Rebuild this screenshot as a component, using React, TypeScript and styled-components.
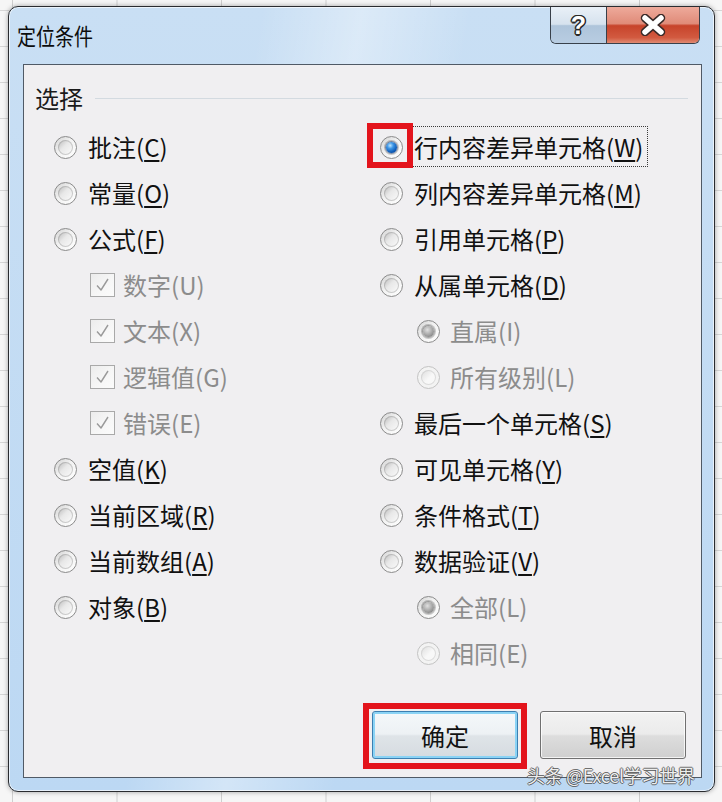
import React from 'react';
import styled, { createGlobalStyle } from 'styled-components';

const Global = createGlobalStyle`
  html, body { margin: 0; padding: 0; }
  body {
    width: 722px;
    height: 802px;
    overflow: hidden;
    background-color: #f6f6f6;
    background-image:
      linear-gradient(90deg, #cfcfcf 1px, transparent 1px),
      linear-gradient(180deg, #d6d6d6 1px, transparent 1px);
    background-size: 104.5px 100%, 100% 36px;
    background-position: 12px 0, 0 10px;
    font-family: "Noto Sans CJK SC", "Noto Sans", sans-serif;
  }
`;

const Window = styled.div`
  position: relative;
  box-sizing: border-box;
  margin: 6px 0 0 8px;
  width: 707px;
  height: 786px;
  border: 1px solid #2a2c30;
  border-radius: 10px;
  background:
    linear-gradient(100deg, rgba(255,255,255,0) 30%, rgba(255,255,255,0.35) 42%, rgba(255,255,255,0) 55%),
    linear-gradient(180deg, #c9dff4 0%, #bcd8f3 100%);
  box-shadow: inset 0 0 0 1px rgba(255, 255, 255, 0.65), 0 0 5px rgba(0, 0, 0, 0.35);
  display: flex;
  flex-direction: column;
`;

const TitleBar = styled.div`
  height: 57px;
  display: flex;
  justify-content: space-between;
  align-items: flex-start;
  padding-left: 8px;
  padding-right: 14px;
`;

const Title = styled.div`
  margin-top: 17px;
  font-size: 19px;
  line-height: 24px;
  color: #0c0c0c;
  transform: scaleY(1.18);
  transform-origin: left center;
`;

const Controls = styled.div`
  display: flex;
  height: 36px;
  border: 1px solid #38404a;
  border-top: none;
  border-radius: 0 0 6px 6px;
  overflow: hidden;
`;

const HelpButton = styled.div`
  width: 55px;
  display: flex;
  align-items: center;
  justify-content: center;
  border-right: 1px solid #38404a;
  background: linear-gradient(180deg, #e9f0f7 0%, #d6e2ee 48%, #aec4da 52%, #b8cde2 100%);
  font-family: "Liberation Sans", Arial, sans-serif;
  font-weight: bold;
  font-size: 25px;
  color: #ffffff;
  text-shadow:
    -1.5px 0 #2a2a2a, 1.5px 0 #2a2a2a, 0 -1.5px #2a2a2a, 0 1.5px #2a2a2a,
    -1px -1px #2a2a2a, 1px 1px #2a2a2a, -1px 1px #2a2a2a, 1px -1px #2a2a2a;
`;

const CloseButton = styled.div`
  width: 92px;
  display: flex;
  align-items: center;
  justify-content: center;
  background: linear-gradient(180deg, #eeaa9b 0%, #e08b79 46%, #c7432b 52%, #d25a40 85%, #e08a72 100%);
`;

const Client = styled.div`
  position: relative;
  flex: 1;
  margin: 0 12px 13px 14px;
  border: 1px solid #505a66;
  background: #f0eff1;
  display: flex;
  flex-direction: column;
`;

const GroupHeader = styled.div`
  margin-top: 20px;
  height: 26px;
  display: flex;
  align-items: center;
  padding-left: 11px;
  padding-right: 13px;
`;

const GroupLabel = styled.span`
  font-size: 24px;
  line-height: 26px;
  color: #1a1a1a;
`;

const GroupLine = styled.span`
  flex: 1;
  height: 1px;
  margin-left: 12px;
  background: #d3dae0;
`;

const Columns = styled.div`
  margin-top: 13px;
  padding-left: 30px;
  display: grid;
  grid-template-columns: 326px 1fr;
`;

const Column = styled.div`
  display: flex;
  flex-direction: column;
`;

const Row = styled.div<{ $indent: number }>`
  height: 46px;
  display: flex;
  align-items: center;
  padding-left: ${(p) => p.$indent}px;
`;

type RadioState = 'off' | 'on' | 'dimOn' | 'disabled';

const RadioCircle = styled.span<{ $state: RadioState }>`
  flex: none;
  position: relative;
  box-sizing: border-box;
  width: 23px;
  height: 23px;
  border-radius: 50%;
  border: 1px solid ${(p) => (p.$state === 'disabled' ? '#c3c3c3' : '#8b8b8b')};
  background: ${(p) => (p.$state === 'disabled' ? '#f3f3f3' : 'linear-gradient(135deg, #d2d2d2 0%, #f2f2f2 45%, #ffffff 100%)')};
  &::before {
    content: '';
    position: absolute;
    inset: 3px;
    border-radius: 50%;
    background: ${(p) =>
      p.$state === 'disabled'
        ? 'linear-gradient(135deg, #dcdcdc 0%, #f8f8f8 55%)'
        : 'linear-gradient(135deg, #b8b8b8 0%, #e8e8e8 42%, #fbfbfb 100%)'};
    box-shadow: inset 0 0 0 1px ${(p) => (p.$state === 'disabled' ? 'rgba(200,200,200,0.6)' : 'rgba(140,140,140,0.4)')};
  }
  &::after {
    content: '';
    display: ${(p) => (p.$state === 'on' || p.$state === 'dimOn' ? 'block' : 'none')};
    position: absolute;
    inset: 5px;
    border-radius: 50%;
    background: ${(p) =>
      p.$state === 'on'
        ? 'radial-gradient(circle at 38% 32%, #bfe6ff 0%, #3f97e6 30%, #0f5cb8 65%, #0a3a80 100%)'
        : 'radial-gradient(circle at 40% 35%, #e0e0e0 0%, #a8a8a8 50%, #6f6f6f 100%)'};
    box-shadow: 0 0 0 1px ${(p) => (p.$state === 'on' ? 'rgba(20,50,100,0.5)' : 'rgba(80,80,80,0.45)')};
  }
`;

const RadioWrap = styled.span`
  position: relative;
  display: inline-flex;
`;

const RedMark = styled.span<{ $l: number; $t: number; $w: number; $h: number }>`
  position: absolute;
  left: ${(p) => p.$l}px;
  top: ${(p) => p.$t}px;
  width: ${(p) => p.$w}px;
  height: ${(p) => p.$h}px;
  box-sizing: border-box;
  border: 6px solid #e3141c;
  pointer-events: none;
`;

const CheckBox = styled.span`
  flex: none;
  box-sizing: border-box;
  width: 25px;
  height: 24px;
  border: 1px solid #a9a9a9;
  background: linear-gradient(135deg, #ececec 0%, #f7f7f7 60%, #fbfbfb 100%);
  display: flex;
  align-items: center;
  justify-content: center;
`;

const Label = styled.span<{ $gap: number; $disabled?: boolean }>`
  margin-left: ${(p) => p.$gap}px;
  font-size: 24px;
  line-height: 30px;
  color: ${(p) => (p.$disabled ? '#8c8c8c' : '#111111')};
  white-space: nowrap;
  u {
    text-decoration-thickness: 1.5px;
    text-underline-offset: 3px;
  }
`;

const Focus = styled.span`
  margin: -3px -5px -3px -3px;
  padding: 2px 4px 2px 2px;
  border: 1px dotted #3a3a3a;
`;

const ButtonRow = styled.div`
  margin-top: auto;
  display: flex;
  justify-content: flex-end;
  gap: 22px;
  padding-right: 15px;
  padding-bottom: 18px;
`;

const DialogButton = styled.div<{ $default?: boolean }>`
  position: relative;
  box-sizing: border-box;
  width: 146px;
  height: 48px;
  border-radius: 3px;
  border: 1px solid ${(p) => (p.$default ? '#3c7fb1' : '#707070')};
  background: ${(p) =>
    p.$default
      ? 'linear-gradient(180deg, #f4f8fa 0%, #edf1f4 48%, #dfe4e8 52%, #d5dbe0 100%)'
      : 'linear-gradient(180deg, #f2f2f2 0%, #ebebeb 48%, #dddddd 52%, #cfcfcf 100%)'};
  box-shadow: inset 0 0 0 ${(p) => (p.$default ? '2px #8ad3f5' : '1px rgba(255,255,255,0.75)')};
  display: flex;
  align-items: center;
  justify-content: center;
  font-size: 24px;
  color: #111111;
`;

const Watermark = styled.div`
  position: absolute;
  left: 518px;
  top: 757px;
  font-size: 18px;
  line-height: 22px;
  color: rgba(255, 255, 255, 0.92);
  letter-spacing: -0.3px;
  text-shadow:
    -1px 0 rgba(70, 70, 70, 0.75), 1px 0 rgba(70, 70, 70, 0.75),
    0 -1px rgba(70, 70, 70, 0.75), 0 1px rgba(70, 70, 70, 0.75);
  white-space: nowrap;
`;

type Item = {
  kind: 'radio' | 'check' | 'sub';
  text: string;
  key: string;
  state?: RadioState;
  marked?: boolean;
  focus?: boolean;
};

const leftItems: Item[] = [
  { kind: 'radio', text: '批注', key: 'C' },
  { kind: 'radio', text: '常量', key: 'O' },
  { kind: 'radio', text: '公式', key: 'F' },
  { kind: 'check', text: '数字', key: 'U' },
  { kind: 'check', text: '文本', key: 'X' },
  { kind: 'check', text: '逻辑值', key: 'G' },
  { kind: 'check', text: '错误', key: 'E' },
  { kind: 'radio', text: '空值', key: 'K' },
  { kind: 'radio', text: '当前区域', key: 'R' },
  { kind: 'radio', text: '当前数组', key: 'A' },
  { kind: 'radio', text: '对象', key: 'B' },
];

const rightItems: Item[] = [
  { kind: 'radio', text: '行内容差异单元格', key: 'W', state: 'on', marked: true, focus: true },
  { kind: 'radio', text: '列内容差异单元格', key: 'M' },
  { kind: 'radio', text: '引用单元格', key: 'P' },
  { kind: 'radio', text: '从属单元格', key: 'D' },
  { kind: 'sub', text: '直属', key: 'I', state: 'dimOn' },
  { kind: 'sub', text: '所有级别', key: 'L', state: 'disabled' },
  { kind: 'radio', text: '最后一个单元格', key: 'S' },
  { kind: 'radio', text: '可见单元格', key: 'Y' },
  { kind: 'radio', text: '条件格式', key: 'T' },
  { kind: 'radio', text: '数据验证', key: 'V' },
  { kind: 'sub', text: '全部', key: 'L', state: 'dimOn' },
  { kind: 'sub', text: '相同', key: 'E', state: 'disabled' },
];

const CheckMark = () => (
  <svg width="17" height="16" viewBox="0 0 17 16">
    <path d="M3 8.5 L7 13 L14 2" fill="none" stroke="#9a9a9a" strokeWidth="1.4" strokeLinejoin="round" />
  </svg>
);

const CloseIcon = () => (
  <svg width="28" height="22" viewBox="0 0 28 22">
    <path d="M6 4 L22 18 M22 4 L6 18" stroke="#3a2a28" strokeWidth="8.5" strokeLinecap="round" />
    <path d="M6 4 L22 18 M22 4 L6 18" stroke="#ffffff" strokeWidth="5.5" strokeLinecap="round" />
  </svg>
);

const OptionRow = ({ item }: { item: Item }) => {
  const disabled = item.kind !== 'radio';
  const keyText = disabled ? item.key : <u>{item.key}</u>;
  const content = (
    <>
      {item.text}({keyText})
    </>
  );
  if (item.kind === 'check') {
    return (
      <Row $indent={36}>
        <CheckBox>
          <CheckMark />
        </CheckBox>
        <Label $gap={8} $disabled>
          {content}
        </Label>
      </Row>
    );
  }
  const isSub = item.kind === 'sub';
  return (
    <Row $indent={isSub ? 37 : 0}>
      <RadioWrap>
        <RadioCircle $state={item.state ?? 'off'} />
        {item.marked && <RedMark $l={-13} $t={-13} $w={46} $h={45} />}
      </RadioWrap>
      <Label $gap={isSub ? 10 : 11} $disabled={isSub}>
        {item.focus ? <Focus>{content}</Focus> : content}
      </Label>
    </Row>
  );
};

export default function App() {
  return (
    <>
      <Global />
      <Window>
        <TitleBar>
          <Title>定位条件</Title>
          <Controls>
            <HelpButton>?</HelpButton>
            <CloseButton>
              <CloseIcon />
            </CloseButton>
          </Controls>
        </TitleBar>
        <Client>
          <GroupHeader>
            <GroupLabel>选择</GroupLabel>
            <GroupLine />
          </GroupHeader>
          <Columns>
            <Column>
              {leftItems.map((it, i) => (
                <OptionRow key={i} item={it} />
              ))}
            </Column>
            <Column>
              {rightItems.map((it, i) => (
                <OptionRow key={i} item={it} />
              ))}
            </Column>
          </Columns>
          <ButtonRow>
            <DialogButton $default>
              确定
              <RedMark $l={-10} $t={-9} $w={164} $h={66} />
            </DialogButton>
            <DialogButton>取消</DialogButton>
          </ButtonRow>
        </Client>
        <Watermark>头条 @Excel学习世界</Watermark>
      </Window>
    </>
  );
}
